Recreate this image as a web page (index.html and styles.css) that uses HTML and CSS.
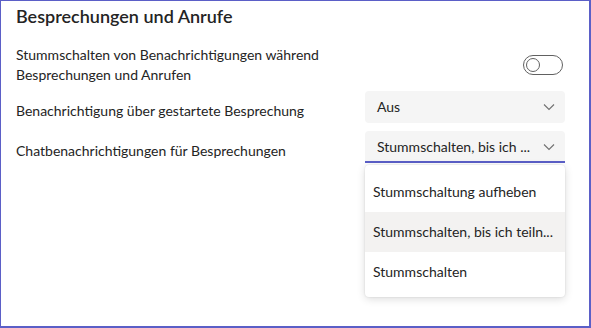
FILE: index.html
```html
<!DOCTYPE html>
<html lang="de">
<head>
    <meta charset="UTF-8">
    <title>Besprechungen und Anrufe</title>
    <link rel="stylesheet" href="styles.css">
</head>
<body>
    <div class="panel">
        <h2 class="title">Besprechungen und Anrufe</h2>

        <div class="row row-toggle">
            <div class="label">Stummschalten von Benachrichtigungen während Besprechungen und Anrufen</div>
            <div class="toggle">
                <span class="knob"></span>
            </div>
        </div>

        <div class="row">
            <div class="label">Benachrichtigung über gestartete Besprechung</div>
            <div class="select">
                <span class="select-text">Aus</span>
                <svg class="chevron" width="12" height="8" viewBox="0 0 12 8"><path d="M1 1.5 L6 6.5 L11 1.5" fill="none" stroke="#707070" stroke-width="1.1"/></svg>
            </div>
        </div>

        <div class="row">
            <div class="label">Chatbenachrichtigungen für Besprechungen</div>
            <div class="select-wrap">
                <div class="select open">
                    <span class="select-text">Stummschalten, bis ich ...</span>
                    <svg class="chevron" width="12" height="8" viewBox="0 0 12 8"><path d="M1 1.5 L6 6.5 L11 1.5" fill="none" stroke="#707070" stroke-width="1.1"/></svg>
                </div>
                <ul class="menu">
                    <li>Stummschaltung aufheben</li>
                    <li class="active">Stummschalten, bis ich teiln...</li>
                    <li>Stummschalten</li>
                </ul>
            </div>
        </div>
    </div>
</body>
</html>
```

FILE: styles.css
```css
body {
    margin: 0;
    font-family: Lato, sans-serif;
    color: #242424;
    background-color: #fff;
}
.panel {
    width: 591px;
    height: 328px;
    box-sizing: border-box;
    border-style: solid;
    border-color: #5b5fc7;
    border-width: 1px 2px 2px 1px;
    padding: 3px 24px 0 15px;
}
.title {
    margin: 0 0 17px;
    font-size: 18px;
    line-height: 24px;
    font-weight: 600;
}
.row {
    display: flex;
    justify-content: space-between;
    align-items: flex-start;
    font-size: 14px;
    line-height: 20px;
    margin-bottom: 8px;
}
.row .label {
    padding-top: 10px;
}
.row-toggle {
    align-items: center;
    margin-bottom: 6px;
}
.row-toggle .label {
    width: 320px;
    padding-top: 0;
}
.toggle {
    width: 36px;
    height: 18px;
    border: 1px solid #616161;
    border-radius: 10px;
    margin-right: 2px;
    display: flex;
    align-items: center;
    padding-left: 2px;
    box-sizing: content-box;
}
.knob {
    width: 14px;
    height: 14px;
    border: 1.5px solid #616161;
    border-radius: 50%;
    box-sizing: border-box;
}
.select-wrap {
    position: relative;
}
.select {
    width: 200px;
    height: 32px;
    box-sizing: border-box;
    background-color: #f5f5f5;
    border-radius: 4px;
    display: flex;
    align-items: center;
    padding: 0 10px 0 12px;
    gap: 8px;
}
.select.open {
    border-radius: 4px 4px 0 0;
    border-bottom: 2px solid #5b5fc7;
    padding-top: 2px;
}
.select-text {
    flex: 1;
    white-space: nowrap;
}
.menu {
    position: absolute;
    top: 34px;
    left: 0;
    width: 200px;
    margin: 0;
    padding: 7px 0 5px;
    list-style: none;
    background-color: #fff;
    border-radius: 4px;
    box-shadow: 0 2px 8px rgba(0, 0, 0, 0.14), 0 0 2px rgba(0, 0, 0, 0.12);
}
.menu li {
    height: 40px;
    line-height: 40px;
    padding: 0 8px;
    white-space: nowrap;
}
.menu li.active {
    background-color: #f3f2f1;
}
```
